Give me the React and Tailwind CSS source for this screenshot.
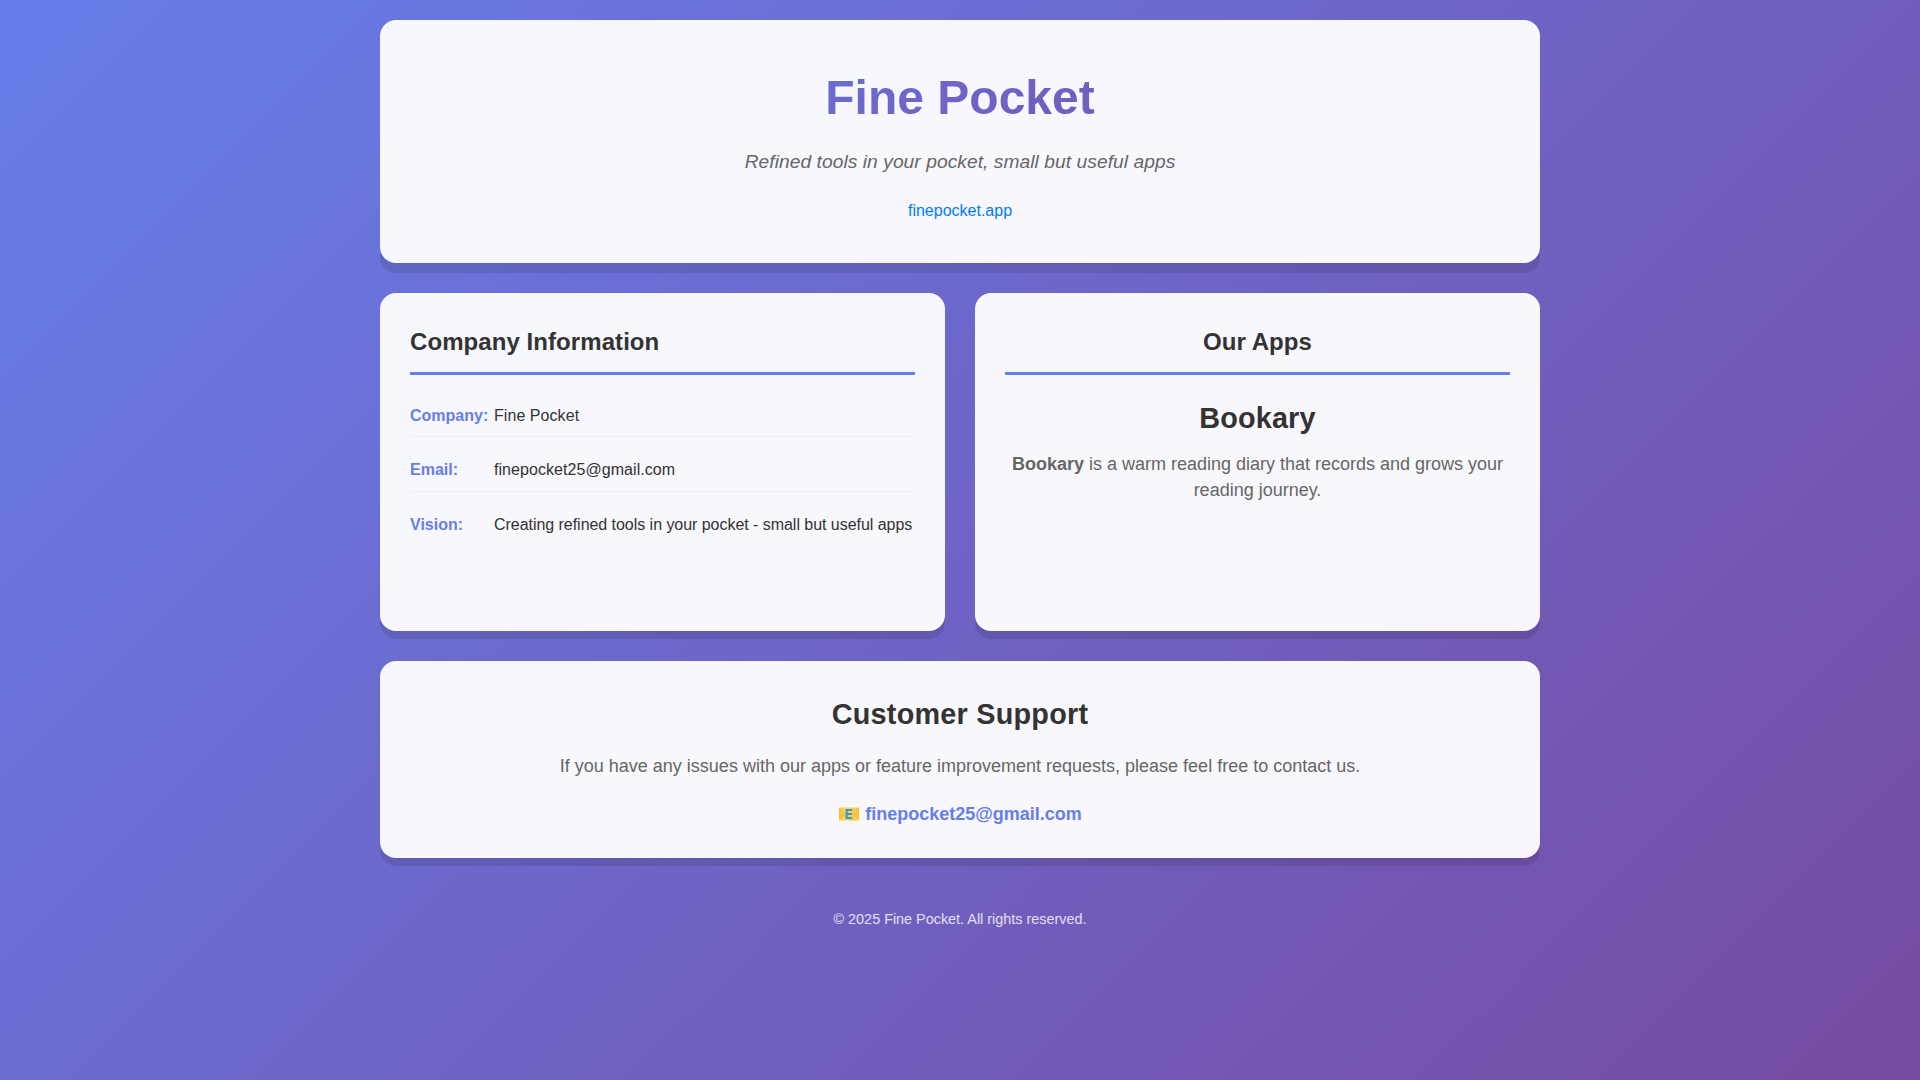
import React from 'react';

const cardClass = 'bg-white/95 rounded-2xl shadow-[0_8px_0_rgba(0,0,0,0.1)]';
const headingClass = 'text-2xl leading-[38.4px] font-bold tracking-[0.07px] text-[#333] pb-2.5 border-b-[3px] border-[#667eea] mb-5';

// yellow e-mail envelope, same look as the emoji in the design
const MailIcon = () => (
    <svg viewBox="0 0 22 16" className="inline-block w-[22px] h-4 align-[-2px]">
        <rect x="1" y="1" width="20" height="14" fill="#ffd053" />
        <path d="M1 1 L8 8 L1 15 Z" fill="#fcc03c" />
        <path d="M21 1 L14 8 L21 15 Z" fill="#fcc03c" />
        <rect x="1" y="1" width="20" height="1" fill="#ffe494" />
        <rect x="1" y="14" width="20" height="1" fill="#ffe494" />
        <path d="M7.5 3 H14.5 V5 H9.8 V7 H14 V9 H9.8 V11 H14.5 V13 H7.5 Z" fill="#3f97d6" />
    </svg>
);

// one row of the company info list
const InfoRow = ({ label, value, last = false }) => (
    <div className={`flex py-2 mb-3 border-[#eeeeee] ${last ? '' : 'border-b'}`}>
        <span className="font-bold text-[#667eea] min-w-[84px]">{label}</span>
        <span className={`text-[#333] ${last ? 'tracking-[-0.04px]' : 'tracking-[0.06px]'}`}>{value}</span>
    </div>
);

const App = () => {
    return (
        <div
            className="min-h-screen bg-[linear-gradient(135deg,#667eea_0%,#764ba2_100%)] leading-[1.6]"
            style={{ fontFamily: '"Liberation Sans", Arial, sans-serif' }}
        >
            <div className="w-[1160px] mx-auto pt-5">
                {/* Hero */}
                <header className="bg-white/95 rounded-2xl shadow-[0_10px_0_rgba(0,0,0,0.1)] p-10 text-center mb-[30px]">
                    <h1 className="text-5xl leading-[76.8px] font-bold mb-2.5 bg-[linear-gradient(135deg,#667eea_0%,#764ba2_100%)] bg-clip-text text-transparent">
                        Fine Pocket
                    </h1>
                    <p className="text-[19.2px] leading-[30.72px] italic tracking-[0.06px] text-[#666] mb-5">
                        Refined tools in your pocket, small but useful apps
                    </p>
                    <a href="#" className="text-[#007bff]">finepocket.app</a>
                </header>

                {/* Info and apps */}
                <div className="grid grid-cols-2 gap-[30px] mb-[30px]">
                    <section className={`${cardClass} p-[30px] h-[338px]`}>
                        <h2 className={headingClass}>Company Information</h2>
                        <InfoRow label="Company:" value="Fine Pocket" />
                        <InfoRow label="Email:" value="finepocket25@gmail.com" />
                        <InfoRow label="Vision:" value="Creating refined tools in your pocket - small but useful apps" last />
                    </section>
                    <section className={`${cardClass} p-[30px] h-[338px] text-center`}>
                        <h2 className={headingClass}>Our Apps</h2>
                        <h3 className="text-[28.8px] leading-[46px] font-bold tracking-[0.15px] text-[#333] mb-[10px]">Bookary</h3>
                        <p className="text-lg leading-[26.4px] text-[#666]">
                            <strong>Bookary</strong> is a warm reading diary that records and grows your reading journey.
                        </p>
                    </section>
                </div>

                {/* Support */}
                <section className={`${cardClass} p-[30px] text-center`}>
                    <h2 className="text-[28.8px] leading-[46px] font-bold tracking-[0.23px] text-[#333] mb-[15px]">Customer Support</h2>
                    <p className="text-lg leading-[28.16px] text-[#666] mb-5">
                        If you have any issues with our apps or feature improvement requests, please feel free to contact us.
                    </p>
                    <a href="#" className="text-lg leading-[28.16px] font-bold text-[#667eea]"><MailIcon /> finepocket25@gmail.com</a>
                </section>

                <footer className="text-center text-white/80 text-[14.4px] pt-[50px]">
                    © 2025 Fine Pocket. All rights reserved.
                </footer>
            </div>
        </div>
    );
};

export default App;
